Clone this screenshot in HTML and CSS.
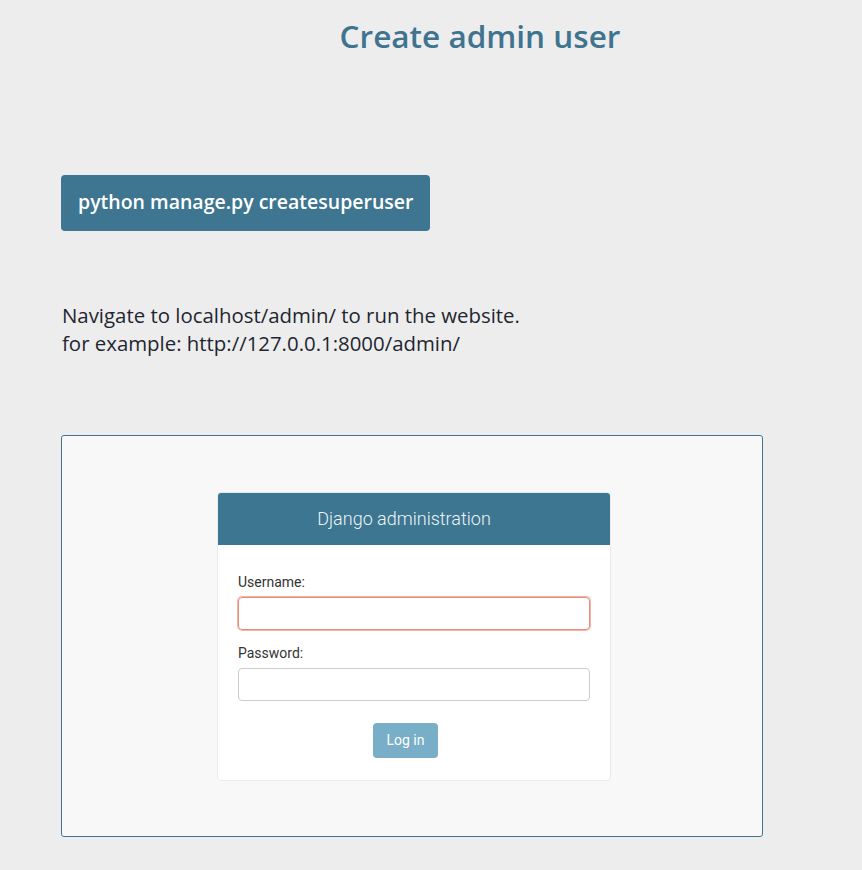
FILE: index.html
```html
<!DOCTYPE html>
<html>
<head>
<meta charset="utf-8">
<link rel="stylesheet" href="styles.css">
</head>
<body>
<div class="page">
  <h1 class="title">Create admin user</h1>
  <div class="command">python manage.py createsuperuser</div>
  <p class="note">Navigate to localhost/admin/ to run the website.<br>for example: http://127.0.0.1:8000/admin/</p>
  <div class="frame">
    <div class="login">
      <div class="login-header">Django administration</div>
      <div class="login-body">
        <label class="field-label">Username:</label>
        <div class="input input-focus"></div>
        <label class="field-label">Password:</label>
        <div class="input"></div>
        <div class="submit-row"><span class="btn">Log in</span></div>
      </div>
    </div>
  </div>
</div>
</body>
</html>
```
FILE: styles.css
```css
html, body {
  margin: 0;
  padding: 0;
  background: #ededed;
}
body {
  font-family: "Open Sans", "Liberation Sans", sans-serif;
  overflow: hidden;
}
.page {
  margin-left: 61px;
  width: 838px;
  padding-top: 14px;
}
.title {
  margin: 0;
  text-align: center;
  font-size: 31.5px;
  font-weight: 600;
  color: #3e7490;
  line-height: 44px;
}
.command {
  display: inline-block;
  margin-top: 117px;
  background: #3e7590;
  color: #fff;
  font-size: 19.5px;
  font-weight: 600;
  border-radius: 4px;
  padding: 0 17px;
  height: 56px;
  line-height: 54px;
}
.note {
  margin: 70px 0 0 1px;
  font-size: 20.4px;
  line-height: 28px;
  color: #1e2630;
}
.frame {
  margin-top: 78px;
  width: 700px;
  height: 344px;
  border: 1px solid #3e7490;
  border-radius: 3px;
  background: #f8f8f8;
  padding-top: 56px;
  box-sizing: content-box;
}
.login {
  width: 392px;
  margin: 0 0 0 155px;
  background: #fff;
  border: 1px solid #eaeaea;
  border-radius: 4px;
  overflow: hidden;
  font-family: Roboto, "Liberation Sans", sans-serif;
}
.login-header {
  background: #3d7690;
  color: #eef4f7;
  text-align: center;
  font-size: 18px;
  font-weight: 300;
  height: 52px;
  line-height: 52px;
  padding-right: 20px;
}
.login-body {
  padding: 28px 20px 22px;
  display: flex;
  flex-direction: column;
}
.field-label {
  font-size: 14px;
  color: #333;
  line-height: 18px;
  margin-bottom: 6px;
}
.input {
  height: 31px;
  border: 1px solid #ccc;
  border-radius: 4px;
  margin-bottom: 14px;
}
.input-focus {
  border-color: #e58d77;
  box-shadow: 0 0 0 1px #f0b6a6;
}
.submit-row {
  display: flex;
  justify-content: flex-start;
  padding-left: 135px;
  margin-top: 8px;
}
.btn {
  background: #79aec8;
  color: #fff;
  font-size: 14px;
  border-radius: 4px;
  width: 65px;
  height: 35px;
  line-height: 35px;
  text-align: center;
}
```
